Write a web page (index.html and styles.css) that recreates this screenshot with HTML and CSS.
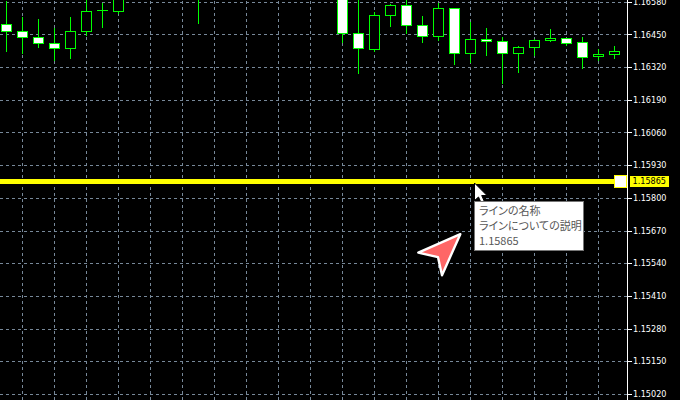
FILE: index.html
```html
<!DOCTYPE html>
<html lang="ja">
<head>
    <meta charset="UTF-8">
    <meta name="viewport" content="width=device-width, initial-scale=1.0">
    <title>チャート</title>
    <link rel="stylesheet" href="styles.css">
</head>
<body>
    <main class="chart">
        <svg class="plot" viewBox="0 0 632 400" preserveAspectRatio="xMaxYMin slice" role="img" aria-label="ローソク足チャート">
            <g id="grid" class="grid"></g>
            <g id="candles" class="candles"></g>
            <rect class="price-line" x="0" y="179" width="620" height="5"/>
            <g id="axis" class="axis">
                <path d="M627.5 0V400"/>
            </g>
            <rect class="handle" x="614.5" y="175.5" width="12" height="12"/>
            <path class="arrow" d="M460.3 234.2L418.3 252.6L438 257.2L442 275.3Z"/>
            <path class="cursor" d="M474.5 183V200.5L478.5 197L481 202.5L484.2 201L481.7 195.5H487Z"/>
        </svg>
        <ul class="prices">
            <li>1.16580</li>
            <li>1.16450</li>
            <li>1.16320</li>
            <li>1.16190</li>
            <li>1.16060</li>
            <li>1.15930</li>
            <li>1.15800</li>
            <li>1.15670</li>
            <li>1.15540</li>
            <li>1.15410</li>
            <li>1.15280</li>
            <li>1.15150</li>
            <li>1.15020</li>
        </ul>
        <span class="current-price">1.15865</span>
        <div class="tooltip" role="tooltip">
            <p>ラインの名称</p>
            <p>ラインについての説明</p>
            <p>1.15865</p>
        </div>
    </main>
    <script src="chart.js"></script>
</body>
</html>
```
FILE: styles.css
```css
* {
    box-sizing: border-box;
}

body {
    margin: 0;
    background: #000;
    color: #fff;
    font-family: "DejaVu Sans Condensed", "DejaVu Sans", sans-serif;
}

.chart {
    position: relative;
    display: grid;
    grid-template-columns: 1fr 48px;
    height: 100vh;
    overflow: hidden;
}

.plot {
    width: 100%;
    height: 100%;
    min-height: 0;
    shape-rendering: crispEdges;
}

.grid path {
    stroke: #778899;
    stroke-dasharray: 3 3;
}

.candles path,
.candles rect {
    stroke: #00ff00;
    fill: #000;
}

.candles .down {
    fill: #fff;
}

.price-line {
    fill: #ffff00;
}

.axis path {
    stroke: #fff;
}

.handle {
    fill: #fff;
    stroke: #ffff00;
}

.arrow {
    fill: #ff6666;
    stroke: #fff;
    stroke-width: 2.4;
    stroke-linejoin: round;
    shape-rendering: auto;
}

.cursor {
    fill: #fff;
    stroke: #000;
    shape-rendering: auto;
}

.prices {
    display: flex;
    flex-direction: column;
    justify-content: space-between;
    margin: -4px 0 -1px;
    padding: 0 0 0 1px;
    list-style: none;
    font-size: 9px;
    line-height: 13px;
}

.current-price {
    position: absolute;
    top: 176px;
    right: 11px;
    padding: 0 3px;
    background: #ffff00;
    color: #000;
    font-size: 9px;
    line-height: 11px;
}

.tooltip {
    position: absolute;
    top: 201px;
    right: 96px;
    width: 110px;
    padding: 1px 4px 2px;
    border: 1px solid #767676;
    background: #fff;
    color: #575757;
    font-family: "Noto Sans CJK JP", sans-serif;
    font-feature-settings: "palt";
    font-size: 11px;
    line-height: 15px;
    white-space: nowrap;
}

.tooltip p {
    margin: 0;
}
```
FILE: chart.js
```js
const SVG_NS = 'http://www.w3.org/2000/svg';
const grid = document.getElementById('grid');
const candles = document.getElementById('candles');
const axis = document.getElementById('axis');

const rows = [2, 34, 67, 100, 132, 165, 198, 231, 263, 296, 329, 361, 394];

// x, wick top, wick bottom, body top, body bottom, falling
const data = [
    [6, 1, 52, 24, 31, true],
    [22, 17, 54, 31, 37, true],
    [38, 19, 48, 37, 43, true],
    [54, 28, 61, 43, 48, true],
    [70, 17, 59, 31, 48, false],
    [86, -5, 36, 11, 31, false],
    [102, 3, 28, 10, 10, false],
    [118, -5, 14, -3, 11, false],
    [198, -5, 24, -5, -5, false],
    [342, -5, 43, -3, 33, true],
    [358, -5, 74, 33, 48, true],
    [374, 12, 52, 15, 49, false],
    [390, 4, 27, 5, 15, false],
    [406, -5, 34, 5, 25, true],
    [422, 16, 43, 25, 36, true],
    [438, 3, 41, 8, 36, false],
    [454, 8, 65, 8, 53, true],
    [470, 22, 63, 39, 53, false],
    [486, 28, 56, 39, 41, true],
    [502, 37, 84, 41, 53, true],
    [518, 46, 73, 47, 53, false],
    [534, 39, 56, 40, 47, false],
    [550, 29, 42, 38, 40, false],
    [566, 38, 46, 38, 43, true],
    [582, 37, 69, 42, 57, true],
    [598, 49, 61, 54, 56, false],
    [614, 46, 59, 51, 54, false]
];

function addLine(parent, d) {
    const path = document.createElementNS(SVG_NS, 'path');
    path.setAttribute('d', d);
    parent.appendChild(path);
}

function addBody(x, top, bottom, falling) {
    const rect = document.createElementNS(SVG_NS, 'rect');
    rect.setAttribute('x', x - 4.5);
    rect.setAttribute('y', top + 0.5);
    rect.setAttribute('width', 10);
    rect.setAttribute('height', bottom - top);
    if (falling) {
        rect.classList.add('down');
    }
    candles.appendChild(rect);
}

for (let x = 22; x < 627; x += 32) {
    addLine(grid, `M${x + 0.5} 1V400`);
}

rows.forEach(function(y) {
    addLine(grid, `M0 ${y + 0.5}H627`);
    addLine(axis, `M628 ${y + 0.5}H632`);
});

data.forEach(function([x, high, low, top, bottom, falling]) {
    addLine(candles, `M${x + 0.5} ${high}V${low}`);
    if (top === bottom) {
        addLine(candles, `M${x - 5} ${top + 0.5}H${x + 6}`);
    } else {
        addBody(x, top, bottom, falling);
    }
});
```
